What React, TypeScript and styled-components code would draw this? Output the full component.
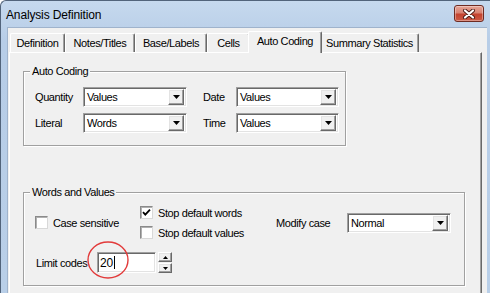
import styled, { createGlobalStyle } from "styled-components";

const GlobalStyle = createGlobalStyle`
  html, body {
    margin: 0;
    padding: 0;
    background: #fff;
  }
  body {
    font-family: "Liberation Sans", Arial, sans-serif;
    font-size: 11px;
    letter-spacing: -0.4px;
    color: #000;
  }
`;

const tabs = [
  { label: "Definition", width: 55 },
  { label: "Notes/Titles", width: 70 },
  { label: "Base/Labels", width: 72 },
  { label: "Cells", width: 43 },
  { label: "Auto Coding", width: 70, active: true },
  { label: "Summary Statistics", width: 99 },
];

function DownArrow() {
  return (
    <svg width="7" height="4" viewBox="0 0 7 4">
      <polygon points="0,0 7,0 3.5,4" fill="#000" />
    </svg>
  );
}

function Combo({ value, width }: { value: string; width: number }) {
  return (
    <ComboBox $width={width}>
      <span>{value}</span>
      <DropButton>
        <DownArrow />
      </DropButton>
    </ComboBox>
  );
}

function Check({ label, checked }: { label: string; checked?: boolean }) {
  return (
    <CheckRow>
      <CheckBox>
        {checked && (
          <svg width="9" height="9" viewBox="0 0 9 9">
            <path d="M1 4.2 L3.3 6.6 L8 1.6" fill="none" stroke="#000" strokeWidth="1.8" />
          </svg>
        )}
      </CheckBox>
      <span>{label}</span>
    </CheckRow>
  );
}

export default function App() {
  return (
    <>
      <GlobalStyle />
      <Window>
        <TitleBar>
          <Title>Analysis Definition</Title>
          <CloseButton>
            <svg width="14" height="10" viewBox="0 0 14 10">
              <path d="M3 1.5 L11 8.5 M11 1.5 L3 8.5" stroke="#4a1a14" strokeWidth="4" strokeLinecap="round" />
              <path d="M3 1.5 L11 8.5 M11 1.5 L3 8.5" stroke="#fff" strokeWidth="2.2" strokeLinecap="round" />
            </svg>
          </CloseButton>
        </TitleBar>

        <Frame>
          <Client>
            <TabStrip>
              {tabs.map((t) => (
                <Tab key={t.label} $width={t.width} $active={!!t.active}>
                  {t.label}
                </Tab>
              ))}
            </TabStrip>

            <TabPanel>
              <GroupBox $width={323} $height={75}>
                <Caption>Auto Coding</Caption>
                <CodingGrid>
                  <Label>Quantity</Label>
                  <Combo value="Values" width={104} />
                  <Label>Date</Label>
                  <Combo value="Values" width={103} />
                  <Label>Literal</Label>
                  <Combo value="Words" width={104} />
                  <Label>Time</Label>
                  <Combo value="Values" width={103} />
                </CodingGrid>
              </GroupBox>

              <GroupBox $width={442} $height={94} $gap={46}>
                <Caption>Words and Values</Caption>
                <OptionsRow>
                  <OptionColumn $width={105}>
                    <Check label="Case sensitive" />
                  </OptionColumn>
                  <OptionColumn $width={136}>
                    <Check label="Stop default words" checked />
                    <Check label="Stop default values" />
                  </OptionColumn>
                  <Label $width={71}>Modify case</Label>
                  <Combo value="Normal" width={104} />
                </OptionsRow>

                <LimitRow>
                  <Label $width={62} $indent={1}>
                    Limit codes
                  </Label>
                  <TextBox>
                    20
                    <Caret />
                  </TextBox>
                  <Spinner>
                    <SpinButton>
                      <svg width="5" height="3" viewBox="0 0 5 3">
                        <polygon points="0,3 5,3 2.5,0" fill="#000" />
                      </svg>
                    </SpinButton>
                    <SpinButton>
                      <svg width="5" height="3" viewBox="0 0 5 3">
                        <polygon points="0,0 5,0 2.5,3" fill="#000" />
                      </svg>
                    </SpinButton>
                  </Spinner>
                  <Highlight width="44" height="40" viewBox="0 0 44 40">
                    <ellipse cx="22" cy="20" rx="20" ry="18" fill="none" stroke="#e23b3b" strokeWidth="1.4" />
                  </Highlight>
                </LimitRow>
              </GroupBox>
            </TabPanel>
          </Client>
        </Frame>
      </Window>
    </>
  );
}

const Window = styled.div`
  width: 490px;
  height: 293px;
  box-sizing: border-box;
  overflow: hidden;
  display: flex;
  flex-direction: column;
  background: linear-gradient(#c6d9ee, #b7cde7 40px, #b9cfe8);
  border-left: 1px solid #52647b;
  border-top: 1px solid #52647b;
  border-top-left-radius: 6px;
`;

const TitleBar = styled.div`
  height: 26px;
  flex: none;
  display: flex;
  align-items: center;
  justify-content: space-between;
  padding: 0 6px 0 5px;
`;

const Title = styled.span`
  font-size: 12px;
  letter-spacing: -0.15px;
  margin-top: 1px;
`;

const CloseButton = styled.div`
  width: 30px;
  height: 17px;
  box-sizing: border-box;
  margin-top: -1px;
  display: flex;
  align-items: center;
  justify-content: center;
  border: 1px solid #6e2b22;
  border-radius: 3px;
  background: linear-gradient(#e6a597 0%, #d88373 45%, #c4432f 55%, #cc5a45 100%);
  box-shadow: inset 0 0 0 1px rgba(255, 255, 255, 0.35);
`;

const Frame = styled.div`
  flex: 1;
  display: flex;
  padding: 0 3px 0 6px;
`;

const Client = styled.div`
  flex: 1;
  display: flex;
  flex-direction: column;
  background: #f0f0f0;
  border-left: 1px solid #9fb3cc;
  border-top: 1px solid #9fb3cc;
`;

const TabStrip = styled.div`
  display: flex;
  align-items: flex-end;
  height: 21px;
  padding: 3px 0 0 2px;
`;

const Tab = styled.div<{ $width: number; $active: boolean }>`
  width: ${(p) => p.$width + (p.$active ? 4 : 0)}px;
  height: ${(p) => (p.$active ? 22 : 19)}px;
  margin: ${(p) => (p.$active ? "0 -2px -1px" : "0")};
  box-sizing: border-box;
  display: flex;
  align-items: center;
  justify-content: center;
  padding-bottom: ${(p) => (p.$active ? 3 : 0)}px;
  background: #f0f0f0;
  border-top: 1px solid #fff;
  border-left: 1px solid #fff;
  border-right: 1px solid #696969;
  border-radius: 2px 2px 0 0;
  box-shadow: inset -1px 0 0 #a0a0a0;
  z-index: ${(p) => (p.$active ? 1 : 0)};
  white-space: nowrap;
`;

const TabPanel = styled.div`
  flex: 1;
  margin: 0 5px 0 1px;
  padding: 18px 0 0 13px;
  border-top: 1px solid #fff;
  border-left: 1px solid #fff;
  border-right: 1px solid #696969;
  box-shadow: inset -1px 0 0 #a0a0a0;
`;

const GroupBox = styled.div<{ $width: number; $height: number; $gap?: number }>`
  position: relative;
  box-sizing: border-box;
  width: ${(p) => p.$width}px;
  height: ${(p) => p.$height}px;
  margin-top: ${(p) => p.$gap ?? 0}px;
  padding: 15px 0 0 11px;
  border: 1px solid #a0a0a0;
  box-shadow: inset 1px 1px 0 #fff, 1px 1px 0 #fff;
`;

const Caption = styled.span`
  position: absolute;
  top: -7px;
  left: 6px;
  padding: 0 2px;
  line-height: 13px;
  background: #f0f0f0;
`;

const CodingGrid = styled.div`
  display: grid;
  grid-template-columns: 48px 120px 33px 103px;
  grid-auto-rows: 20px;
  row-gap: 6px;
  align-items: center;
`;

const Label = styled.span<{ $width?: number; $indent?: number }>`
  white-space: nowrap;
  ${(p) => (p.$width ? `width: ${p.$width}px; flex: none;` : "")}
  padding-left: ${(p) => p.$indent ?? 0}px;
  box-sizing: border-box;
`;

const ComboBox = styled.div<{ $width: number }>`
  width: ${(p) => p.$width}px;
  height: 20px;
  box-sizing: border-box;
  display: flex;
  align-items: center;
  justify-content: space-between;
  padding: 2px 2px 2px 3px;
  background: #fff;
  border: 1px solid;
  border-color: #a0a0a0 #fff #fff #a0a0a0;
  box-shadow: inset 1px 1px 0 #696969, inset -1px -1px 0 #e3e3e3;
  flex: none;
`;

const Raised = styled.div`
  box-sizing: border-box;
  display: flex;
  align-items: center;
  justify-content: center;
  background: #f0f0f0;
  border: 1px solid;
  border-color: #fff #696969 #696969 #fff;
  box-shadow: inset -1px -1px 0 #a0a0a0, inset 1px 1px 0 #e3e3e3;
`;

const DropButton = styled(Raised)`
  width: 16px;
  height: 16px;
`;

const OptionsRow = styled.div`
  display: flex;
  align-items: center;
  height: 33px;
  margin-top: -2px;
`;

const OptionColumn = styled.div<{ $width: number }>`
  width: ${(p) => p.$width}px;
  flex: none;
  display: flex;
  flex-direction: column;
  gap: 7px;
`;

const CheckRow = styled.label`
  display: flex;
  align-items: center;
  gap: 5px;
  height: 13px;
  white-space: nowrap;
`;

const CheckBox = styled.span`
  width: 13px;
  height: 13px;
  box-sizing: border-box;
  flex: none;
  display: flex;
  align-items: center;
  justify-content: center;
  background: #fff;
  border: 1px solid;
  border-color: #8a8a8a #d8d8d8 #d8d8d8 #8a8a8a;
  box-shadow: inset 1px 1px 0 #b0b0b0;
`;

const LimitRow = styled.div`
  position: relative;
  display: flex;
  align-items: center;
  margin-top: 13px;
  height: 21px;
`;

const TextBox = styled.div`
  width: 59px;
  height: 21px;
  box-sizing: border-box;
  display: flex;
  align-items: center;
  padding-left: 2px;
  background: #fff;
  border: 1px solid;
  border-color: #a0a0a0 #fff #fff #a0a0a0;
  box-shadow: inset 1px 1px 0 #696969, inset -1px -1px 0 #e3e3e3;
  font-size: 12px;
  letter-spacing: -0.2px;
`;

const Caret = styled.span`
  width: 1px;
  height: 13px;
  margin-left: 1px;
  background: #000;
`;

const Spinner = styled.div`
  display: flex;
  flex-direction: column;
  gap: 1px;
  margin-left: 2px;
`;

const SpinButton = styled(Raised)`
  width: 14px;
  height: 10px;
`;

const Highlight = styled.svg`
  position: absolute;
  left: 51px;
  top: -12px;
  pointer-events: none;
`;
